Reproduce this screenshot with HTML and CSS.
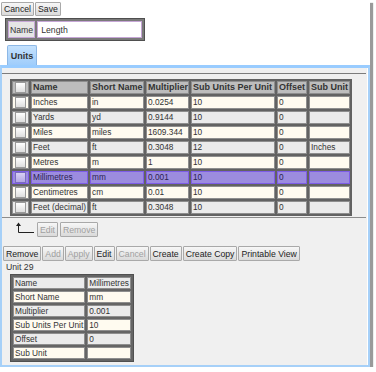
FILE: index.html
```html
<!DOCTYPE html>
<html lang="en">
<head>
  <meta charset="UTF-8" />
  <title>Unit Set - Length</title>
  <link rel="stylesheet" href="styles.css">
</head>
<body>
  <div class="window">
    <div class="toolbar">
      <button class="btn">Cancel</button>
      <button class="btn">Save</button>
    </div>

    <table class="name-table">
      <tr>
        <td class="label">Name</td>
        <td class="field"><input type="text" value="Length" /></td>
      </tr>
    </table>

    <div class="tabs">
      <div class="tab">Units</div>
    </div>

    <div class="panel">
      <div class="grid-box">
        <table class="grid">
          <tr class="head">
            <th class="c-cb"><span class="cb"></span></th>
            <th class="c-name">Name</th>
            <th class="c-short">Short Name</th>
            <th class="c-mult">Multiplier</th>
            <th class="c-sub">Sub Units Per Unit</th>
            <th class="c-off">Offset</th>
            <th class="c-unit">Sub Unit</th>
          </tr>
          <tr class="odd"><td><span class="cb"></span></td><td>Inches</td><td>in</td><td>0.0254</td><td>10</td><td>0</td><td></td></tr>
          <tr class="even"><td><span class="cb"></span></td><td>Yards</td><td>yd</td><td>0.9144</td><td>10</td><td>0</td><td></td></tr>
          <tr class="odd"><td><span class="cb"></span></td><td>Miles</td><td>miles</td><td>1609.344</td><td>10</td><td>0</td><td></td></tr>
          <tr class="even"><td><span class="cb"></span></td><td>Feet</td><td>ft</td><td>0.3048</td><td>12</td><td>0</td><td>Inches</td></tr>
          <tr class="odd"><td><span class="cb"></span></td><td>Metres</td><td>m</td><td>1</td><td>10</td><td>0</td><td></td></tr>
          <tr class="selected"><td><span class="cb"></span></td><td>Millimetres</td><td>mm</td><td>0.001</td><td>10</td><td>0</td><td></td></tr>
          <tr class="odd"><td><span class="cb"></span></td><td>Centimetres</td><td>cm</td><td>0.01</td><td>10</td><td>0</td><td></td></tr>
          <tr class="even"><td><span class="cb"></span></td><td>Feet (decimal)</td><td>ft</td><td>0.3048</td><td>10</td><td>0</td><td></td></tr>
        </table>
      </div>

      <div class="edit-row">
        <svg class="arrow" width="20" height="12" viewBox="0 0 20 12">
          <path d="M3.5 2 V10.5 H19" fill="none" stroke="#222" stroke-width="1" />
          <path d="M1 4 L3.5 0.5 L6 4 Z" fill="#222" />
        </svg>
        <button class="btn tall" disabled>Edit</button>
        <button class="btn tall" disabled>Remove</button>
      </div>

      <div class="actions">
        <button class="btn tall">Remove</button>
        <button class="btn tall" disabled>Add</button>
        <button class="btn tall" disabled>Apply</button>
        <button class="btn tall">Edit</button>
        <button class="btn tall" disabled>Cancel</button>
        <button class="btn tall">Create</button>
        <button class="btn tall">Create Copy</button>
        <button class="btn tall">Printable View</button>
      </div>

      <div class="unit-title">Unit 29</div>

      <table class="detail">
        <tr class="even"><td class="d-label">Name</td><td class="d-value">Millimetres</td></tr>
        <tr class="odd"><td>Short Name</td><td>mm</td></tr>
        <tr class="even"><td>Multiplier</td><td>0.001</td></tr>
        <tr class="odd"><td>Sub Units Per Unit</td><td>10</td></tr>
        <tr class="even"><td>Offset</td><td>0</td></tr>
        <tr class="odd"><td>Sub Unit</td><td></td></tr>
      </table>
    </div>
  </div>
</body>
</html>
```

FILE: styles.css
```css
body {
  margin: 0;
  background: #fff;
  color: #333;
  font-family: "Liberation Sans", Arial, sans-serif;
}

.window {
  width: 370px;
  height: 367px;
  display: flex;
  flex-direction: column;
  background: #fff;
  box-shadow: 3px 3px 1px #9a9a9a;
}

.toolbar {
  display: flex;
  gap: 1px;
  padding: 2px 0 0 1px;
}

.btn {
  height: 14px;
  margin: 0;
  padding: 0 2px;
  font-family: "Liberation Sans", Arial, sans-serif;
  font-size: 8.7px;
  line-height: 12px;
  color: #222;
  background: linear-gradient(#f7f7f7, #dadada);
  border: 1px solid #a9a9a9;
  border-radius: 1px;
}

.btn.tall {
  height: 15px;
}

.btn:disabled {
  color: #a0a0a0;
}

/* name field */
.name-table {
  align-self: flex-start;
  margin: 2px 0 0 5px;
  border: 1px solid #4f4f4f;
  border-spacing: 2px;
  background: #7a7a7a;
}

.name-table td {
  padding: 0;
  height: 17px;
  box-sizing: border-box;
}

.name-table .label {
  width: 25px;
  padding: 0 1px;
  font-size: 8.7px;
  background: #e6e6e6;
  border: 1px solid #c6a6d6;
}

.name-table input {
  display: block;
  width: 105px;
  height: 17px;
  box-sizing: border-box;
  margin: 0;
  padding: 0 3px;
  border: 1px solid #c6a6d6;
  font-family: "Liberation Sans", Arial, sans-serif;
  font-size: 8.7px;
  color: #333;
  background: #fff;
}

/* tabs */
.tabs {
  display: flex;
  margin: 4px 0 0 7px;
}

.tab {
  width: 30px;
  height: 20px;
  box-sizing: border-box;
  display: flex;
  align-items: center;
  justify-content: center;
  font-size: 9px;
  font-weight: bold;
  color: #333;
  background: linear-gradient(#c4e1fd, #9fcdfb);
  border: 1px solid #8db8e6;
  border-bottom: 0;
  border-radius: 2px 2px 0 0;
}

.panel {
  flex: 1;
  background: #f0f0f0;
  border: 2px solid #a6d0f8;
  border-top: 3px solid #99ccff;
  box-shadow: inset -1px 0 #fff;
}

/* units grid */
.grid-box {
  margin: 5px 2px 0 0;
  padding: 5px 0 1px 8px;
  border-top: 1px solid #7c7c7c;
  border-bottom: 1px solid #8c8c8c;
}

.grid {
  width: 342px;
  table-layout: fixed;
  border-spacing: 2px;
  background: #626262;
}

.grid th,
.grid td {
  box-sizing: border-box;
  padding: 0 1px;
  border: 1px solid #8e8e8e;
  font-size: 8.3px;
  line-height: 11px;
  text-align: left;
  white-space: nowrap;
  overflow: hidden;
  color: #333;
}

.grid th {
  font-size: 9px;
  font-weight: bold;
  background: #bdbdbd;
}

.c-cb { width: 17px; }
.c-name { width: 57px; }
.c-short { width: 54px; }
.c-mult { width: 43px; }
.c-sub { width: 84px; }
.c-off { width: 30px; }
.c-unit { width: 41px; }

.cb {
  display: block;
  width: 9px;
  height: 9px;
  margin: 0 auto;
  border: 1px solid #9a9a9a;
  background: linear-gradient(#fff, #dedede);
}

.odd td {
  background: #fffbf0;
}

.even td {
  background: #ebebeb;
}

.grid .selected td {
  background: #9c8cdf;
  border-color: #7e5ce8;
  color: #2b2352;
}

.selected .cb {
  background: linear-gradient(#d8d0f4, #b4a8e6);
  border-color: #7a6cc0;
}

.edit-row {
  display: flex;
  align-items: flex-end;
  gap: 2px;
  margin: 4px 0 0 13px;
}

.arrow {
  margin-bottom: 3px;
}

.actions {
  display: flex;
  gap: 1px;
  margin: 9px 0 0 1px;
}

.unit-title {
  margin: 1px 0 0 4px;
  font-size: 8.7px;
  line-height: 11px;
}

/* selected unit details */
.detail {
  margin: 1px 0 0 8px;
  table-layout: fixed;
  border: 1px solid #505050;
  border-spacing: 2px;
  background: #656565;
}

.detail td {
  box-sizing: border-box;
  padding: 0 1px;
  border: 1px solid #8e8e8e;
  font-size: 8.3px;
  line-height: 10px;
  white-space: nowrap;
  overflow: hidden;
}

.d-label { width: 72px; }
.d-value { width: 44px; }
```
